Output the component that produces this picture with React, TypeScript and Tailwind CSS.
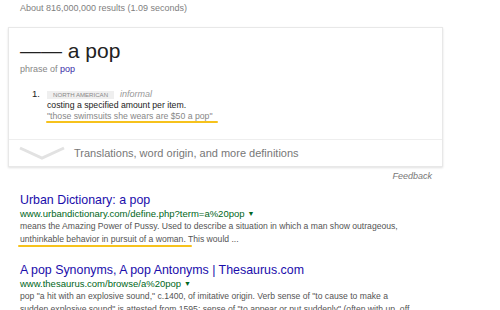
import React from "react";

const font = { fontFamily: '"Liberation Sans", Arial, sans-serif' };

function Result({
  title,
  url,
  lines,
  underline,
}: {
  title: string;
  url: string;
  lines: React.ReactNode[];
  underline?: number;
}) {
  return (
    <div className="flex flex-col">
      <div className="text-[12.4px] leading-[15px] text-[#1a0dab] whitespace-nowrap">{title}</div>
      <div className="flex items-center text-[9.5px] leading-[12px] text-[#006621] whitespace-nowrap">
        <span>{url}</span>
        <span className="ml-[3px] text-[7px] leading-[12px]">▼</span>
      </div>
      <div className="relative text-[8.6px] leading-[13px] text-[#545454]">
        {lines.map((l, i) => (
          <div key={i} className="whitespace-nowrap">
            {l}
          </div>
        ))}
        {underline ? (
          <div
            className="absolute left-[-2px] top-[25px] h-[2px] bg-[#f6c21c] rounded-full"
            style={{ width: underline }}
          />
        ) : null}
      </div>
    </div>
  );
}

export default function App() {
  return (
    <div className="w-[500px] h-[310px] overflow-hidden bg-white relative" style={font}>
      <div className="pt-[2px] pl-[20px] text-[9px] leading-[12px] text-[#808080]">
        About 816,000,000 results (1.09 seconds)
      </div>

      <div className="ml-[8px] mt-[13px] w-[435px] border border-[#e8e8e8] shadow-[0_1px_2px_rgba(0,0,0,0.12)] bg-white">
        <div className="pl-[11px] pt-[11px]">
          <div className="text-[21px] leading-[24px] text-[#222] whitespace-nowrap">—— a pop</div>
          <div className="text-[9px] leading-[12px] text-[#878787]">
            phrase of <span className="text-[#3b2ca8]">pop</span>
          </div>
          <div className="mt-[14px] pl-[12px]">
            <div className="flex items-center h-[11px]">
              <span className="text-[9.5px] text-[#222] w-[15px]">1.</span>
              <span className="bg-[#efefef] text-[#8a8a8a] text-[6.1px] leading-[8px] px-[6px] h-[8px] flex items-center">
                NORTH AMERICAN
              </span>
              <span className="ml-[6px] italic text-[9px] text-[#999]">informal</span>
            </div>
            <div className="pl-[15px] text-[8.7px] leading-[11px] text-[#222]">costing a specified amount per item.</div>
            <div className="pl-[15px] text-[8.7px] leading-[10px] text-[#878787]">
              "those swimsuits she wears are $50 a pop"
            </div>
            <div className="ml-[14px] w-[172px] h-[2px] bg-[#f6c21c] rounded-full" />
          </div>
          <div className="h-[16px]" />
        </div>
        <div className="border-t border-[#eeeeee] h-[27px] flex items-center pl-[10px]">
          <svg width="46" height="14" viewBox="0 0 46 14" className="shrink-0">
            <polyline points="1,2 23,12 45,2" fill="none" stroke="#e2e2e2" strokeWidth="3" />
          </svg>
          <span className="ml-[9px] text-[11px] text-[#777] whitespace-nowrap">
            Translations, word origin, and more definitions
          </span>
        </div>
      </div>

      <div className="w-[443px] flex justify-end pr-[11px] pt-[3px] text-[9px] leading-[12px] italic text-[#777]">
        Feedback
      </div>

      <div className="pl-[20px] mt-[11px] flex flex-col gap-[17px]">
        <Result
          title="Urban Dictionary: a pop"
          url="www.urbandictionary.com/define.php?term=a%20pop"
          lines={[
            "means the Amazing Power of Pussy. Used to describe a situation in which a man show outrageous,",
            "unthinkable behavior in pursuit of a woman. This would ...",
          ]}
          underline={174}
        />
        <Result
          title="A pop Synonyms, A pop Antonyms | Thesaurus.com"
          url="www.thesaurus.com/browse/a%20pop"
          lines={[
            'pop "a hit with an explosive sound," c.1400, of imitative origin. Verb sense of "to cause to make a',
            'sudden explosive sound" is attested from 1595; sense of "to appear or put suddenly" (often with up, off',
          ]}
        />
      </div>
    </div>
  );
}
